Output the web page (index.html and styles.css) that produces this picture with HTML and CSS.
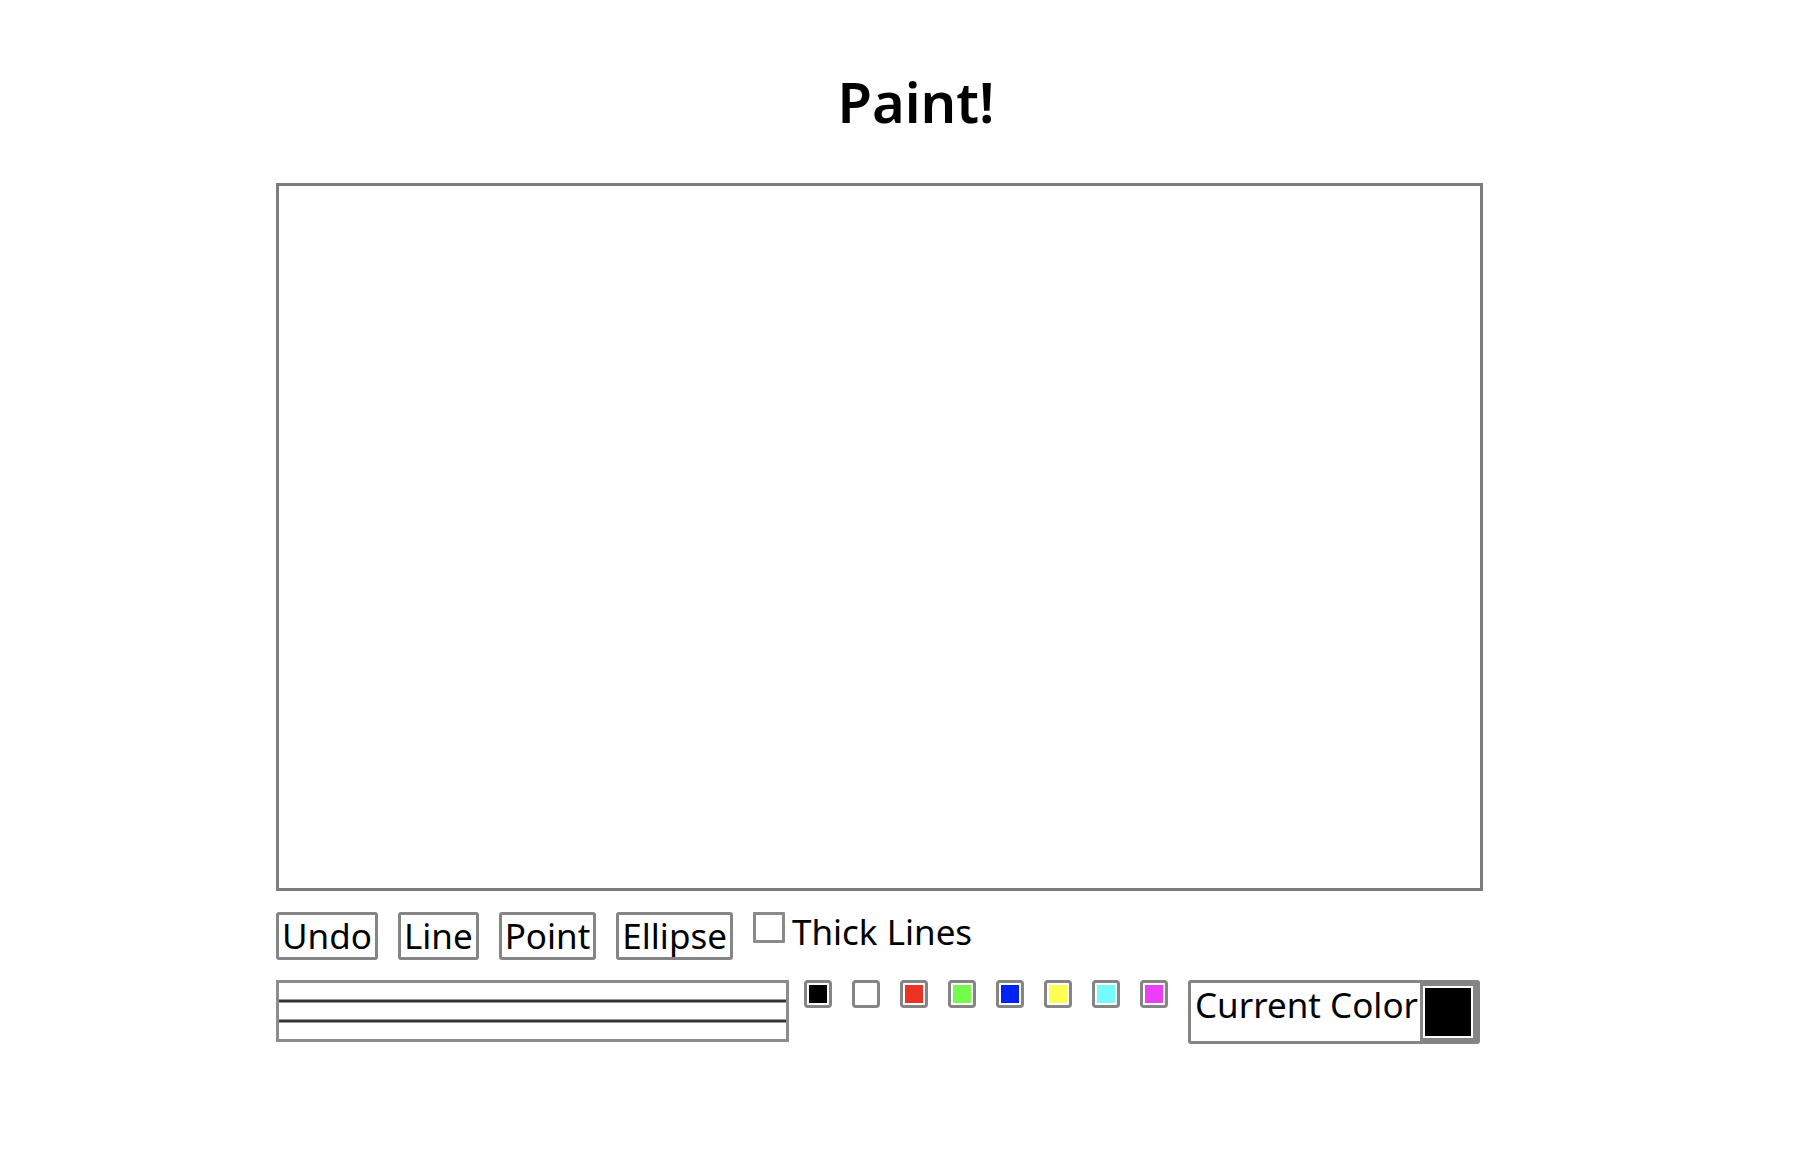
FILE: index.html
```html
<!DOCTYPE html>
<html>
<head>
<meta charset="utf-8">
<title>Paint!</title>
<link rel="stylesheet" href="styles.css">
</head>
<body>
<h1 class="title">Paint!</h1>
<main class="app">
  <div class="canvas"></div>
  <div class="tools">
    <button class="btn">Undo</button>
    <button class="btn">Line</button>
    <button class="btn">Point</button>
    <button class="btn">Ellipse</button>
    <label class="thick"><span class="check"></span><span class="thick-text">Thick Lines</span></label>
  </div>
  <div class="bottom">
    <div class="widths">
      <div class="wrow"></div>
      <div class="wline"></div>
      <div class="wrow"></div>
      <div class="wline"></div>
      <div class="wrow"></div>
    </div>
    <div class="swatches">
      <span class="swatch"><span class="fill c-black"></span></span>
      <span class="swatch"><span class="fill c-white"></span></span>
      <span class="swatch"><span class="fill c-red"></span></span>
      <span class="swatch"><span class="fill c-green"></span></span>
      <span class="swatch"><span class="fill c-blue"></span></span>
      <span class="swatch"><span class="fill c-yellow"></span></span>
      <span class="swatch"><span class="fill c-cyan"></span></span>
      <span class="swatch"><span class="fill c-magenta"></span></span>
    </div>
    <div class="current">
      <span class="current-text">Current Color</span>
      <span class="current-swatch"><span class="current-fill"></span></span>
    </div>
  </div>
</main>
</body>
</html>
```

FILE: styles.css
```css
html, body {
  margin: 0;
  padding: 0;
  background: #ffffff;
}
body {
  font-family: "Noto Sans", "DejaVu Sans", sans-serif;
  color: #000;
}
.title {
  margin: 0;
  padding: 62px 0 0 24px;
  text-align: center;
  font-size: 56px;
  font-weight: 600;
  line-height: 78px;
  height: 78px;
}
.app {
  margin: 43px 0 0 276px;
  width: 1207px;
}
.canvas {
  box-sizing: border-box;
  width: 1207px;
  height: 708px;
  border: 3px solid #7d7d7d;
  background: #fff;
}
.tools {
  display: flex;
  align-items: flex-start;
  gap: 20px;
  margin-top: 21px;
}
.btn {
  box-sizing: border-box;
  height: 48px;
  margin: 0;
  padding: 0 3px;
  border: 3px solid #858585;
  border-radius: 3px;
  background: #fff;
  font-family: inherit;
  font-size: 35px;
  line-height: 42px;
  color: #000;
}
.thick {
  display: flex;
  align-items: flex-start;
  gap: 7px;
}
.check {
  box-sizing: border-box;
  width: 32px;
  height: 31px;
  border: 3px solid #8a8a8a;
  border-radius: 1px;
}
.thick-text {
  font-size: 35px;
  line-height: 40px;
}
.bottom {
  display: flex;
  align-items: flex-start;
  margin-top: 19px;
}
.widths {
  box-sizing: border-box;
  width: 513px;
  height: 62px;
  margin-top: 1px;
  border: 3px solid #8c8c8c;
  display: flex;
  flex-direction: column;
}
.wrow {
  flex: 1;
}
.wline {
  height: 2px;
  background: #333;
  border-top: 1px solid #999;
  border-bottom: 1px solid #999;
}
.swatches {
  display: flex;
  gap: 20px;
  margin: 1px 0 0 15px;
}
.swatch {
  box-sizing: border-box;
  width: 28px;
  height: 28px;
  border: 3px solid #858585;
  border-radius: 4px;
  padding: 2px;
  background: #fff;
  display: block;
}
.fill {
  display: block;
  width: 100%;
  height: 100%;
}
.c-black { background: #000000; }
.c-white { background: #ffffff; }
.c-red { background: #ea3323; }
.c-green { background: #75fb4c; }
.c-blue { background: #0023f5; }
.c-yellow { background: #fffe54; }
.c-cyan { background: #75fbfd; }
.c-magenta { background: #ea3ff7; }
.current {
  box-sizing: border-box;
  display: flex;
  align-items: flex-start;
  width: 292px;
  height: 64px;
  margin: 1px 0 0 20px;
  border: 3px solid #858585;
  border-radius: 3px;
  padding-left: 4px;
}
.current-text {
  font-size: 35px;
  line-height: 44px;
  white-space: nowrap;
  flex: 1;
}
.current-swatch {
  box-sizing: border-box;
  display: block;
  width: 57px;
  height: 58px;
  border: 3px solid #858585;
  border-right-width: 4px;
  padding: 2px;
  background: #fff;
}
.current-fill {
  display: block;
  width: 100%;
  height: 100%;
  background: #000;
}
```
